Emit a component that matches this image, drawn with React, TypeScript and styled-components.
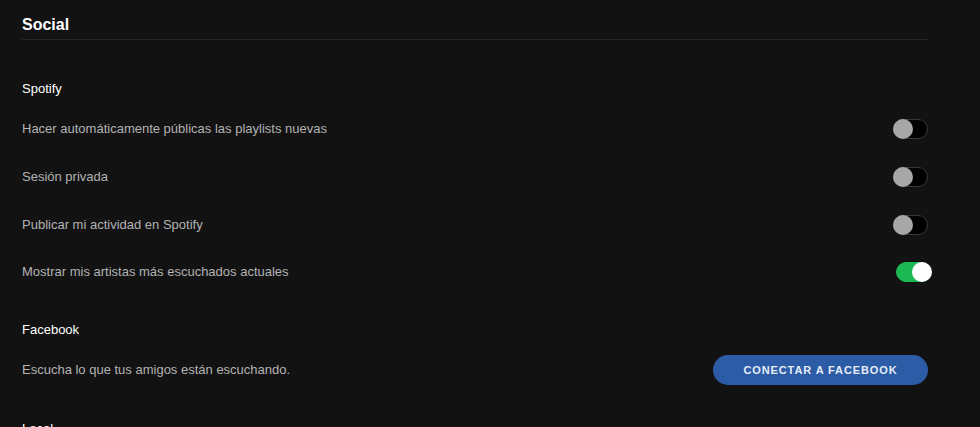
import React from 'react';
import styled, { createGlobalStyle } from 'styled-components';

const GlobalStyle = createGlobalStyle`
  html, body {
    margin: 0;
    padding: 0;
    background: #121212;
    overflow: hidden;
  }
  body {
    font-family: "Liberation Sans", Arial, sans-serif;
    -webkit-font-smoothing: antialiased;
  }
`;

const Page = styled.div`
  width: 980px;
  height: 427px;
  box-sizing: border-box;
  padding: 15px 52px 0 22px;
  background: #121212;
  overflow: hidden;
`;

const Title = styled.h2`
  margin: 0;
  padding-bottom: 4px;
  font-size: 16px;
  font-weight: 700;
  line-height: 20px;
  color: #fff;
  border-bottom: 1px solid #262626;
`;

const Section = styled.section`
  display: flex;
  flex-direction: column;
`;

const SectionTitle = styled.h3<{ $top: number }>`
  margin: ${p => p.$top}px 0 0;
  font-size: 13px;
  font-weight: 400;
  line-height: 16px;
  color: #fff;
`;

const Row = styled.div<{ $top: number }>`
  display: flex;
  align-items: center;
  justify-content: space-between;
  margin-top: ${p => p.$top}px;
  height: 30px;
`;

const Label = styled.span`
  font-size: 13px;
  line-height: 16px;
  color: #b3b3b3;
`;

const Track = styled.button<{ $on: boolean }>`
  position: relative;
  width: 35px;
  height: 20px;
  padding: 0;
  margin-right: ${p => (p.$on ? '-3px' : '0')};
  border-radius: 10px;
  border: 1px solid ${p => (p.$on ? '#1db954' : '#3a3a3a')};
  background: ${p => (p.$on ? '#1db954' : '#000')};
  box-sizing: border-box;
  cursor: pointer;
`;

const Knob = styled.span<{ $on: boolean }>`
  position: absolute;
  top: -1px;
  left: ${p => (p.$on ? '15px' : '-1px')};
  width: 20px;
  height: 20px;
  border-radius: 50%;
  background: ${p => (p.$on ? '#fff' : '#a7a7a7')};
`;

const FbButton = styled.button`
  width: 215px;
  height: 30px;
  border: none;
  border-radius: 15px;
  background: #2d5ca6;
  color: #e6edf8;
  font-family: "Liberation Sans", Arial, sans-serif;
  font-size: 11px;
  font-weight: 700;
  letter-spacing: 0.9px;
  cursor: pointer;
`;

const Toggle: React.FC<{ on?: boolean }> = ({ on = false }) => (
  <Track $on={on} aria-pressed={on}>
    <Knob $on={on} />
  </Track>
);

const spotifyRows = [
  { label: 'Hacer automáticamente públicas las playlists nuevas', on: false, top: 17 },
  { label: 'Sesión privada', on: false, top: 18 },
  { label: 'Publicar mi actividad en Spotify', on: false, top: 18 },
  { label: 'Mostrar mis artistas más escuchados actuales', on: true, top: 17 },
];

const App: React.FC = () => (
  <>
    <GlobalStyle />
    <Page>
      <Title>Social</Title>
      <Section>
        <SectionTitle $top={41}>Spotify</SectionTitle>
        {spotifyRows.map(r => (
          <Row key={r.label} $top={r.top}>
            <Label>{r.label}</Label>
            <Toggle on={r.on} />
          </Row>
        ))}
      </Section>
      <Section>
        <SectionTitle $top={35}>Facebook</SectionTitle>
        <Row $top={17}>
          <Label>Escucha lo que tus amigos están escuchando.</Label>
          <FbButton>CONECTAR A FACEBOOK</FbButton>
        </Row>
      </Section>
      <Section>
        <SectionTitle $top={36}>Local</SectionTitle>
      </Section>
    </Page>
  </>
);

export default App;
